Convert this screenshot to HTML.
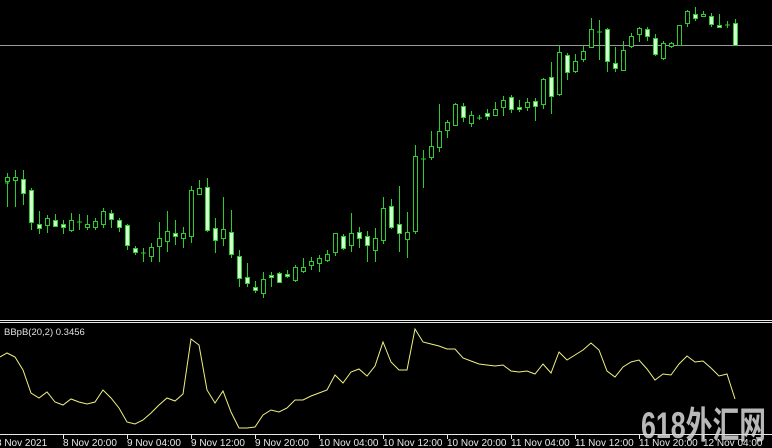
<!DOCTYPE html>
<html><head><meta charset="utf-8"><style>
html,body{margin:0;padding:0;background:#000;width:772px;height:448px;overflow:hidden}
svg{display:block}
text{font-family:"Liberation Sans",sans-serif}
</style></head><body>
<svg width="772" height="448" viewBox="0 0 772 448" xmlns="http://www.w3.org/2000/svg">
<rect width="772" height="448" fill="#000"/>
<line x1="0" y1="45.5" x2="772" y2="45.5" stroke="#9a9a9a" stroke-width="1"/>
<g stroke="#2ecc2e" stroke-width="1" shape-rendering="crispEdges">
<path fill="none" d="M7.5 173V207M15.5 170V207M23.5 170V205M31.5 188V230M39.5 211V234M47.5 215V233M55.5 214V227M63.5 220V234M71.5 213V232M79.5 214V230M87.5 215V230M95.5 218V230M103.5 208V228M111.5 210V228M119.5 218V232M127.5 224V250M135.5 246V255M143.5 248V262M151.5 243V262M159.5 222V262M167.5 211V252M175.5 220V245M183.5 227V248M191.5 186V243M199.5 180V195M207.5 178V232M215.5 218V253M223.5 197V246M231.5 210V258M239.5 250V287M247.5 263V287M255.5 281V293M263.5 272V298M271.5 272V287M279.5 272V283M287.5 270V278M295.5 265V282M303.5 258V273M311.5 257V270M319.5 255V272M327.5 250V262M335.5 233V256M343.5 234V250M351.5 213V252M359.5 227V248M367.5 231V262M375.5 228V262M383.5 197V244M391.5 199V229M399.5 186V252M407.5 212V258M415.5 145V234M423.5 150V188M431.5 131V160M439.5 104V152M447.5 120V138M455.5 103V125M463.5 103V122M471.5 111V127M479.5 115V120M487.5 109V120M495.5 102V116M503.5 96V116M511.5 95V113M519.5 100V112M527.5 98V111M535.5 98V121M543.5 78V109M551.5 62V114M559.5 46V96M567.5 53V80M575.5 54V73M583.5 45V62M591.5 18V48M599.5 20V60M607.5 28V72M615.5 47V72M623.5 41V71M631.5 33V48M639.5 27V42M647.5 27V41M655.5 34V56M663.5 41V60M671.5 42V48M679.5 25V45M687.5 10V27M695.5 7V21M703.5 11V17M711.5 13V27M719.5 14V28M727.5 21V28M735.5 19V46M5 183H9M77 222H82M141 253H146M421 159H426M477 118H482M597 32H602M725 25H730"/>
<g fill="#000">
<rect x="5.5" y="177.5" width="4" height="4"/><rect x="13.5" y="177.5" width="4" height="3"/>
<rect x="45.5" y="218.5" width="4" height="7"/><rect x="69.5" y="220.5" width="4" height="10"/>
<rect x="85.5" y="224.5" width="4" height="3"/><rect x="93.5" y="221.5" width="4" height="6"/>
<rect x="101.5" y="211.5" width="4" height="13"/><rect x="149.5" y="247.5" width="4" height="9"/>
<rect x="157.5" y="238.5" width="4" height="8"/><rect x="165.5" y="231.5" width="4" height="10"/>
<rect x="181.5" y="233.5" width="4" height="5"/><rect x="189.5" y="190.5" width="4" height="46"/>
<rect x="197.5" y="188.5" width="4" height="6"/><rect x="221.5" y="229.5" width="4" height="9"/>
<rect x="261.5" y="279.5" width="4" height="14"/><rect x="293.5" y="267.5" width="4" height="13"/>
<rect x="301.5" y="267.5" width="4" height="4"/><rect x="309.5" y="261.5" width="4" height="4"/>
<rect x="317.5" y="258.5" width="4" height="5"/><rect x="325.5" y="254.5" width="4" height="6"/>
<rect x="333.5" y="233.5" width="4" height="19"/><rect x="349.5" y="233.5" width="4" height="12"/>
<rect x="373.5" y="238.5" width="4" height="12"/><rect x="381.5" y="208.5" width="4" height="32"/>
<rect x="405.5" y="232.5" width="4" height="7"/><rect x="413.5" y="156.5" width="4" height="75"/>
<rect x="429.5" y="146.5" width="4" height="11"/><rect x="437.5" y="131.5" width="4" height="16"/>
<rect x="445.5" y="122.5" width="4" height="8"/><rect x="453.5" y="104.5" width="4" height="21"/>
<rect x="469.5" y="115.5" width="4" height="8"/><rect x="493.5" y="109.5" width="4" height="6"/>
<rect x="501.5" y="100.5" width="4" height="7"/><rect x="525.5" y="102.5" width="4" height="5"/>
<rect x="541.5" y="79.5" width="4" height="25"/><rect x="557.5" y="52.5" width="4" height="42"/>
<rect x="573.5" y="61.5" width="4" height="10"/><rect x="581.5" y="51.5" width="4" height="8"/>
<rect x="589.5" y="29.5" width="4" height="18"/><rect x="621.5" y="50.5" width="4" height="20"/>
<rect x="629.5" y="36.5" width="4" height="10"/><rect x="637.5" y="28.5" width="4" height="6"/>
<rect x="661.5" y="43.5" width="4" height="15"/><rect x="669.5" y="43.5" width="4" height="3"/>
<rect x="677.5" y="25.5" width="4" height="20"/><rect x="685.5" y="11.5" width="4" height="12"/>
<rect x="701.5" y="14.5" width="4" height="2"/>
</g>
<g fill="#d4ffd0">
<rect x="21.5" y="179.5" width="4" height="14"/><rect x="29.5" y="190.5" width="4" height="32"/>
<rect x="37.5" y="224.5" width="4" height="4"/><rect x="53.5" y="220.5" width="4" height="6"/>
<rect x="61.5" y="224.5" width="4" height="3"/><rect x="109.5" y="213.5" width="4" height="6"/>
<rect x="117.5" y="220.5" width="4" height="7"/><rect x="125.5" y="225.5" width="4" height="20"/>
<rect x="133.5" y="248.5" width="4" height="4"/><rect x="173.5" y="233.5" width="4" height="3"/>
<rect x="205.5" y="187.5" width="4" height="43"/><rect x="213.5" y="228.5" width="4" height="12"/>
<rect x="229.5" y="232.5" width="4" height="22"/><rect x="237.5" y="256.5" width="4" height="22"/>
<rect x="245.5" y="277.5" width="4" height="6"/><rect x="253.5" y="287.5" width="4" height="3"/>
<rect x="269.5" y="275.5" width="4" height="2"/><rect x="277.5" y="273.5" width="4" height="9"/>
<rect x="285.5" y="274.5" width="4" height="2"/><rect x="341.5" y="236.5" width="4" height="12"/>
<rect x="357.5" y="232.5" width="4" height="6"/><rect x="365.5" y="236.5" width="4" height="9"/>
<rect x="389.5" y="206.5" width="4" height="21"/><rect x="397.5" y="224.5" width="4" height="9"/>
<rect x="461.5" y="106.5" width="4" height="11"/><rect x="485.5" y="113.5" width="4" height="3"/>
<rect x="509.5" y="97.5" width="4" height="12"/><rect x="517.5" y="107.5" width="4" height="2"/>
<rect x="533.5" y="101.5" width="4" height="5"/><rect x="549.5" y="77.5" width="4" height="19"/>
<rect x="565.5" y="55.5" width="4" height="17"/><rect x="605.5" y="29.5" width="4" height="32"/>
<rect x="613.5" y="63.5" width="4" height="5"/><rect x="645.5" y="29.5" width="4" height="7"/>
<rect x="653.5" y="38.5" width="4" height="16"/><rect x="693.5" y="14.5" width="4" height="4"/>
<rect x="709.5" y="16.5" width="4" height="8"/><rect x="717.5" y="25.5" width="4" height="2"/>
<rect x="733.5" y="23.5" width="4" height="22"/>
</g>
</g>
<g stroke="#e8e8e8" shape-rendering="crispEdges">
<line x1="0" y1="320.5" x2="772" y2="320.5"/>
<line x1="0" y1="322.5" x2="772" y2="322.5"/>
<line x1="0" y1="434.5" x2="772" y2="434.5"/>
<path d="M63.5 435V439M127.5 435V439M191.5 435V439M255.5 435V439M319.5 435V439M383.5 435V439M447.5 435V439M511.5 435V439M575.5 435V439M639.5 435V439M703.5 435V439"/>
</g>
<text x="4" y="335" font-size="9.5" fill="#e0e0e0">BBpB(20,2) 0.3456</text>
<polyline fill="none" stroke="#f0f080" stroke-width="1" points="0,357 7,353 15,357 23,370 31,393 39,398 47,392 55,402 63,405 71,399 79,402 87,404 95,402 103,390 111,398 119,408 127,422 135,424 143,420 151,413 159,405 167,398 175,401 183,394 191,339 199,345 207,390 215,403 223,391 231,412 239,428 247,428 255,427 263,415 271,410 279,412 287,408 295,400 303,400 311,396 319,393 327,390 335,375 343,383 351,372 359,369 367,376 375,366 383,342 391,362 399,370 407,370 415,329 423,342 431,344 439,346 447,349 455,349 463,358 471,361 479,364 487,365 495,366 503,365 511,371 519,372 527,371 535,374 543,364 551,373 559,352 567,360 575,355 583,350 591,343 599,350 607,371 615,377 623,367 631,362 639,360 647,369 655,380 663,374 671,375 679,364 687,356 695,362 703,361 711,368 719,376 727,374 735,399"/>
<text x="641" y="438" font-size="37" font-weight="bold" fill="#d8d8d8" fill-opacity="0.85" style="font-family:'Liberation Sans','Noto Sans CJK SC',sans-serif" textLength="125" lengthAdjust="spacingAndGlyphs">618外汇网</text>
<g font-size="10" fill="#e8e8e8">
<text x="-4" y="446">8 Nov 2021</text>
<text x="63" y="446">8 Nov 20:00</text>
<text x="127" y="446">9 Nov 04:00</text>
<text x="191" y="446">9 Nov 12:00</text>
<text x="255" y="446">9 Nov 20:00</text>
<text x="319" y="446">10 Nov 04:00</text>
<text x="383" y="446">10 Nov 12:00</text>
<text x="447" y="446">10 Nov 20:00</text>
<text x="511" y="446">11 Nov 04:00</text>
<text x="575" y="446">11 Nov 12:00</text>
<text x="639" y="446">11 Nov 20:00</text>
<text x="703" y="446">12 Nov 04:00</text>
</g>
</svg>
</body></html>
